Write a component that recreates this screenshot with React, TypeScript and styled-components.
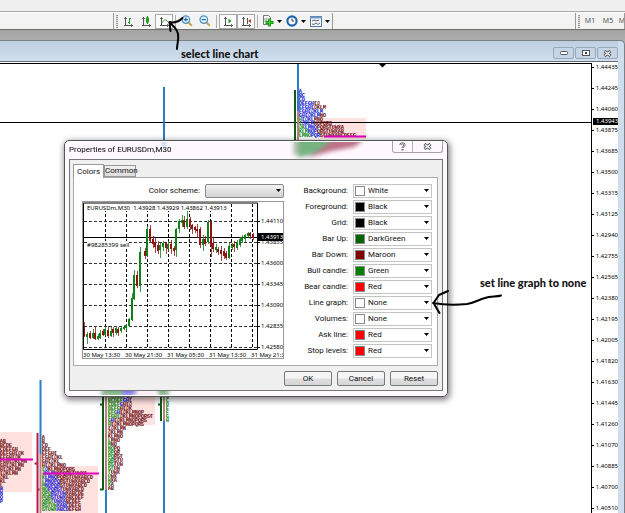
import React from "react";
import styled, { createGlobalStyle } from "styled-components";

const Global = createGlobalStyle`
  * { box-sizing: border-box; }
  html, body { margin: 0; background: #ababab; }
  body { overflow: hidden; font-family: Roboto, "Noto Sans", sans-serif; font-size: 8px; color: #111; }
  button, select { font: inherit; color: inherit; margin: 0; padding: 0; }
`;

const Page = styled.div`
  position: relative;
  display: flex;
  flex-direction: column;
  height: 100vh;
  overflow: hidden;
`;

/* ---------- toolbars ---------- */
const MenuStrip = styled.div`
  flex: none;
  height: 12px;
  background: #f0f0f0;
  border-bottom: 1px solid #a6a6a6;
`;
const ToolbarRow = styled.div`
  flex: none;
  display: flex;
  height: 18px;
  background: #f3f3f3;
  border-top: 1px solid #fff;
  border-bottom: 1px solid #6c7468;
  overflow: hidden;
`;
const Band = styled.div<{ $w?: number }>`
  flex: ${(p) => (p.$w ? `0 0 ${p.$w}px` : "1 1 0")};
  display: flex;
  align-items: center;
  border-right: 1px solid #9a9a9a;
  overflow: hidden;
`;
const Grip = styled.span`
  flex: none;
  width: 2px;
  height: 13px;
  margin: 0 1px 0 2px;
  background: repeating-linear-gradient(#999 0 1px, #ddd 1px 2px);
`;
const Tool = styled.button<{ $on?: boolean; $w?: number }>`
  flex: none;
  display: flex;
  align-items: center;
  justify-content: center;
  gap: 3px;
  width: ${(p) => p.$w ?? 18}px;
  height: 15px;
  border: 1px solid ${(p) => (p.$on ? "#aaa" : "transparent")};
  background: ${(p) => (p.$on ? "#fafafa" : "transparent")};
`;
const Sep = styled.span`
  flex: none;
  width: 1px;
  height: 13px;
  margin: 0 2px;
  background: #b0b0b0;
`;
const Period = styled.button`
  flex: none;
  width: 18px;
  border: 0;
  background: none;
  font-family: "Open Sans", sans-serif;
  font-size: 7px;
  line-height: 12px;
  color: #444;
`;

/* ---------- chart window ---------- */
const Desktop = styled.main`
  flex: 1;
  min-height: 0;
  display: flex;
  flex-direction: column;
  padding-top: 10px;
  background: linear-gradient(#a4a4a4, #adadad 10px);
`;
const ChartWindow = styled.section`
  flex: 1;
  min-height: 0;
  display: flex;
  flex-direction: column;
  border: solid #777f87;
  border-width: 1px 1px 0 0;
  border-radius: 0 5px 0 0;
  background: #cfdeec;
  padding-right: 6px;
`;
const WindowBar = styled.header`
  flex: none;
  display: flex;
  justify-content: flex-end;
  align-items: flex-end;
  gap: 1px;
  height: 21px;
  padding-bottom: 2px;
  background: linear-gradient(#c0cfdf, #cfdfee);
  border-bottom: 1px solid #6a6875;
`;
const WinButton = styled.button`
  display: flex;
  align-items: center;
  justify-content: center;
  width: 21px;
  height: 12px;
  border: 1px solid #98a8bb;
  border-radius: 2px;
  background: #c6d5e5;
`;
const ChartArea = styled.div`
  flex: 1;
  min-height: 0;
  display: flex;
  background: #fff;
  padding-top: 1px;
`;
const Plot = styled.div`
  flex: 1;
  min-width: 0;
  overflow: hidden;
  border: solid #000;
  border-width: 1px 1px 0 0;
  svg { display: block; overflow: visible; }
`;
const Axis = styled.div`
  position: relative;
  flex: 0 0 26px;
  display: flex;
  flex-direction: column;
  gap: 13px;
  overflow: hidden;
`;
const Tick = styled.span`
  flex: none;
  display: flex;
  align-items: center;
  gap: 2px;
  height: 8px;
  font-family: "Noto Sans", sans-serif;
  font-size: 6px;
  line-height: 8px;
  color: #000;
  &::before { content: ""; width: 2px; height: 1px; background: #000; }
`;
const PriceTag = styled.span`
  position: absolute;
  top: 55px;
  left: 1px;
  right: 0;
  height: 7px;
  padding-left: 3px;
  background: #000;
  color: #fff;
  font-family: "Noto Sans", sans-serif;
  font-size: 6px;
  line-height: 7px;
`;

/* ---------- dialog ---------- */
const Dialog = styled.section`
  position: absolute;
  left: 64px;
  top: 140px;
  width: 384px;
  display: flex;
  flex-direction: column;
  padding: 0 4px 5px;
  border: 1px solid #555;
  border-radius: 5px;
  background: rgba(255, 240, 255, 0.4);
  backdrop-filter: blur(2px);
  box-shadow: inset 0 0 0 1px #fff, 1px 2px 6px 1px rgba(0, 0, 0, 0.5);
`;
const DialogBar = styled.header`
  display: flex;
  justify-content: space-between;
  height: 18px;
`;
const DialogTitle = styled.h1`
  margin: 0;
  font-family: Roboto, sans-serif;
  font-size: 8px;
  font-weight: 400;
  line-height: 17px;
  color: #000;
`;
const Caps = styled.div`
  display: flex;
  height: 12px;
  border: 1px solid #a9a3a9;
  border-top: 0;
  border-radius: 0 0 3px 3px;
`;
const Cap = styled.button<{ $w: number }>`
  display: flex;
  align-items: center;
  justify-content: center;
  width: ${(p) => p.$w}px;
  border: 0;
  background: none;
  & + & { border-left: 1px solid #bbb4bb; }
`;
const DialogBody = styled.div`
  display: flex;
  flex-direction: column;
  padding: 4px 4px 4px 3px;
  border: 1px solid #777;
  background: #f0f0f0;
`;
const Tabs = styled.div`
  display: flex;
  align-items: flex-end;
  height: 13px;
`;
const Tab = styled.button<{ $on?: boolean }>`
  position: relative;
  z-index: ${(p) => (p.$on ? 1 : 0)};
  width: ${(p) => (p.$on ? 31 : 32)}px;
  height: ${(p) => (p.$on ? 14 : 12)}px;
  margin-bottom: ${(p) => (p.$on ? -1 : 0)}px;
  border: 1px solid #999;
  border-bottom: ${(p) => (p.$on ? "0" : "1px solid #999")};
  background: ${(p) => (p.$on ? "#fff" : "linear-gradient(#f2f2f2, #dcdcdc)")};
  line-height: 10px;
`;
const Panel = styled.div`
  display: flex;
  justify-content: space-between;
  height: 189px;
  padding: 6px 5px 6px 8px;
  border: 1px solid #aaa;
  background: #fff;
`;
const LeftCol = styled.div`
  display: flex;
  flex-direction: column;
  gap: 3px;
  width: 202px;
`;
const SchemeRow = styled.div`
  display: flex;
  justify-content: flex-end;
  align-items: center;
  gap: 5px;
  height: 14px;
`;
const Preview = styled.div`
  height: 158px;
  border: 1px solid #999;
  svg { display: block; }
`;
const Settings = styled.div`
  display: flex;
  flex-direction: column;
  gap: 2px;
`;
const Setting = styled.div`
  display: flex;
  justify-content: flex-end;
  align-items: center;
  gap: 5px;
  height: 14px;
`;
const Label = styled.label`
  line-height: 12px;
  white-space: nowrap;
`;
const Picker = styled.span`
  position: relative;
  display: flex;
  width: 79px;
  height: 14px;
  svg { position: absolute; right: 3px; top: 5px; pointer-events: none; }
`;
const Select = styled.select<{ $scheme?: boolean }>`
  appearance: none;
  flex: 1;
  min-width: 0;
  height: 14px;
  padding-left: 14px;
  border: 1px solid ${(p) => (p.$scheme ? "#888" : "#c4c4c4")};
  border-radius: ${(p) => (p.$scheme ? 2 : 0)}px;
  background: ${(p) => (p.$scheme ? "linear-gradient(#f2f2f2, #d2d2d2)" : "#fff")};
  line-height: 12px;
`;
const Swatch = styled.span<{ $c: string }>`
  position: absolute;
  left: 2px;
  top: 2px;
  width: 10px;
  height: 10px;
  border: 1px solid #888;
  background: ${(p) => p.$c};
  pointer-events: none;
`;
const Actions = styled.div`
  display: flex;
  justify-content: flex-end;
  gap: 5px;
  padding-top: 5px;
`;
const PushButton = styled.button`
  width: 48px;
  height: 15px;
  border: 1px solid #777;
  border-radius: 2px;
  background: linear-gradient(#f6f6f6 45%, #dedede 55%, #d6d6d6);
  line-height: 12px;
`;

/* ---------- annotations ---------- */
const Note = styled.p<{ $x: number; $y: number }>`
  position: absolute;
  left: ${(p) => p.$x}px;
  top: ${(p) => p.$y}px;
  margin: 0;
  font-family: Lato, sans-serif;
  font-size: 11px;
  font-weight: 900;
  line-height: 14px;
  color: #111;
  white-space: nowrap;
`;
const Ink = styled.svg`
  position: absolute;
  left: 0;
  top: 0;
  pointer-events: none;
  fill: none;
  stroke: #000;
  stroke-width: 2;
  stroke-linecap: round;
  stroke-linejoin: round;
`;

const Arrow = () => (
  <svg width="5" height="3" viewBox="0 0 5 3"><path d="M0 0h5L2.5 3z" fill="#000" /></svg>
);

/* ---------- toolbar icons ---------- */
const Axes = ({ children }: { children?: React.ReactNode }) => (
  <svg width="11" height="11" viewBox="0 0 11 11" fill="none" stroke="#555">
    <path d="M2.5 1v9M1 9.5h9M1.2 2.5h2.6M8.5 8.2v2.6" />
    {children}
  </svg>
);
const Lens = ({ plus }: { plus?: boolean }) => (
  <svg width="12" height="12" viewBox="0 0 12 12" fill="none">
    <path d="M7.5 7.5l3.3 3.3" stroke="#c9a83c" strokeWidth="2" />
    <circle cx="4.8" cy="4.6" r="3.8" fill="#e2f0fb" stroke="#4d8ec4" strokeWidth="1.2" />
    <path d={plus ? "M2.8 4.6h4M4.8 2.6v4" : "M2.8 4.6h4"} stroke="#246cae" strokeWidth="1.2" />
  </svg>
);
const NewIcon = () => (
  <svg width="12" height="12" viewBox="0 0 12 12">
    <path d="M1.5.5h5l2 2v7h-7z" fill="#fff" stroke="#777" />
    <path d="M3 3v4M4.8 2.5v4" stroke="#999" />
    <path d="M7.5 3.5v8M3.5 7.5h8" stroke="#149714" strokeWidth="2.8" />
    <path d="M7.5 4.5v6M4.5 7.5h6" stroke="#36d236" />
  </svg>
);
const ClockIcon = () => (
  <svg width="12" height="12" viewBox="0 0 12 12">
    <circle cx="6" cy="6" r="4.6" fill="#f4f8fc" stroke="#1e62ae" strokeWidth="2.1" />
    <path d="M6 3.5V6h2" fill="none" stroke="#444" />
  </svg>
);
const TemplateIcon = () => (
  <svg width="12" height="11" viewBox="0 0 12 11" fill="none">
    <rect x=".5" y=".5" width="11" height="10" fill="#f6f9fc" stroke="#51789f" />
    <path d="M0 1.5h12" stroke="#6d9bc8" strokeWidth="2" />
    <path d="M2 5l2-1 2 1 3-1M2 8l2 .5L6 7l2 1.5L10 7" stroke="#666" />
  </svg>
);

/* ---------- price profiles ---------- */
const GREEN = "#108a10";
const BLUE = "#1818d0";
const MAROON = "#701010";
const LETTERS = "ABCDEFGHIJKLMNOPQRSTUWX";
type Row = [number, number, number];

const letters = (from: number, n: number) =>
  Array.from({ length: n }, (_, i) => LETTERS[(from + i) % LETTERS.length]).join("");

const Profile = ({ x, y, rows }: { x: number; y: number; rows: Row[] }) => (
  <g fontFamily="Liberation Mono, monospace" fontSize="5" fontWeight="700">
    {rows.map(([g, b, m], i) => (
      <g key={i}>
        <g strokeWidth="3" strokeDasharray="1 2" opacity=".4">
          <path d={`M${x} ${y + i * 4 - 2}h${g * 3}`} stroke={GREEN} />
          <path d={`M${x + g * 3} ${y + i * 4 - 2}h${b * 3}`} stroke={BLUE} />
          <path d={`M${x + (g + b) * 3} ${y + i * 4 - 2}h${m * 3}`} stroke={MAROON} />
        </g>
        <text x={x} y={y + i * 4}>
          <tspan fill={GREEN}>{letters(i, g)}</tspan>
          <tspan fill={BLUE}>{letters(i + g, b)}</tspan>
          <tspan fill={MAROON}>{letters(i + g + b, m)}</tspan>
        </text>
      </g>
    ))}
  </g>
);

const edge: Row[] = [[0,0,2],[0,0,4],[0,0,6],[0,0,8],[0,0,7],[0,0,9],[0,0,8],[0,0,7],[0,0,6],[0,0,3],[0,0,2],[0,0,1],[0,1,0],[0,1,0],[0,1,0],[0,1,0]];
const second: Row[] = [[0,0,1],[0,0,1],[0,0,2],[0,0,3],[0,0,5],[0,0,7],[0,0,6],[0,0,8],[1,1,9],[1,3,11],[1,4,12],[1,5,10],[1,5,9],[2,5,7],[3,5,6],[3,5,6],[4,4,5],[5,4,4],[5,4,4]];
const third: Row[] = [[5,3,0],[5,2,1],[4,1,3],[4,0,4],[3,1,8],[4,0,11],[1,1,11],[1,0,11],[0,0,6],[0,0,5],[0,0,5],[1,0,3],[1,0,2],[2,0,2],[2,0,2],[2,0,3],[2,0,3],[2,0,3],[2,0,2],[1,0,3],[1,0,2],[1,0,2],[1,0,1],[0,0,2]];
const fourth: Row[] = Array.from({ length: 8 }, () => [1, 0, 0] as Row);
const top: Row[] = [[0,1,0],[0,2,0],[0,2,0],[0,5,2],[0,5,4],[0,8,0],[0,7,2],[1,4,3],[1,4,6],[2,4,9],[3,3,9],[4,3,12]];

const Main = () => (
  <svg width="591" height="449" viewBox="0 64 591 449">
    <g fill="#ffe2e0">
      <path d="M0 432h32v60H0zM43 466h55v47H43zM108 392h47v33h-47zM320 118h46v21h-46z" />
    </g>
    <path d="M0 122.5h3000" stroke="#000" />
    <path d="M379 64h7l-3.500 3.500z" />
    <g strokeWidth="2">
      <path d="M164 87v60M40.500 380v74M106 490v23M164 421v92M298 64v47" stroke="#2580c8" />
      <path d="M40.500 454v59M106 390v100M164 390v31M298 111v44" stroke="#b48288" />
      <path d="M37.500 433v80M34.500 463.500h3M37.500 489.500h2" stroke="#b81c4e" />
      <path d="M103 390v100M100 404.500h3M100 489.500h3M161 390v31M158 404.500h3M295 90v65" stroke="#0f5c18" />
    </g>
    <Profile x={0} y={443} rows={edge} />
    <Profile x={42} y={439} rows={second} />
    <Profile x={108} y={398} rows={third} />
    <Profile x={166} y={394} rows={fourth} />
    <Profile x={299} y={93} rows={top} />
    <path d="M0 459.500h33M43 473.500h56M324 136.500h42" stroke="#e000c0" strokeWidth="2" />
    <path d="M298 140h34l-12 12-22 6z" fill="#1c8a2c" />
    <path d="M332 140h32l-10 7-22 4-26 7 14-8z" fill="#902038" />
    <path d="M103 386h26v8h-26zM158 386h10v8h-10z" fill="#1c8a2c" />
    <path d="M122 386h14v8h-14z" fill="#2a2ad8" />
  </svg>
);

/* x, body top, body bottom, wick top, wick bottom, rising */
type Candle = [number, number, number, number, number, number];
const candles: Candle[] = [
  [84,326,336,322,337,0],[87,334,337,332,344,1],[90,333,338,331,339,0],[93,333,338,329,339,1],[95,333,339,327,340,0],[98,336,339,334,340,1],
  [100,333,338,330,339,1],[103,331,335,329,336,0],[105,329,335,327,336,1],[108,330,336,326,338,0],[111,331,336,327,337,1],[113,329,333,327,337,0],
  [116,328,333,326,335,1],[118,329,333,327,336,0],[121,328,331,327,333,1],[124,327,329,325,330,1],[126,325,328,324,331,1],[129,319,326,318,327,1],
  [132,298,320,293,321,1],[134,275,299,270,300,1],[137,275,286,271,288,0],[140,252,286,247,292,1],[145,251,256,248,259,0],[147,229,256,226,257,1],
  [150,229,241,225,242,0],[153,239,244,236,248,0],[155,242,247,238,253,0],[158,245,251,241,254,0],[160,245,250,243,258,1],[163,243,247,241,251,1],
  [166,243,248,242,254,0],[168,244,249,241,252,1],[171,244,249,240,254,0],[174,248,251,246,256,0],[176,229,250,228,257,1],[179,221,229,219,233,1],
  [182,220,223,215,227,1],[184,220,227,216,229,0],[187,219,227,211,229,1],[190,219,225,217,230,0],[192,225,229,224,234,0],[195,227,230,226,233,0],
  [197,229,231,224,238,0],[200,229,245,227,248,0],[203,239,245,235,251,1],[205,239,244,236,246,0],[208,222,242,220,244,1],[211,222,246,220,257,0],
  [213,243,249,238,252,0],[216,247,250,244,253,1],[218,249,252,247,255,0],[221,250,254,246,261,0],[224,251,256,248,259,0],[226,253,258,251,260,0],
  [229,246,258,243,259,1],[232,245,248,243,250,1],[234,244,247,241,252,0],[237,243,248,240,250,1],[240,239,245,237,247,1],[242,237,241,235,243,1],
  [245,235,239,234,242,1],[248,233,236,232,238,1],[250,233,236,232,239,0],[253,235,238,233,240,0],
];
const prices = ["1.44110", "1.43855", "1.43600", "1.43345", "1.43090", "1.42835", "1.42580"];
const times = ["30 May 13:30", "30 May 21:30", "31 May 05:30", "31 May 13:30", "31 May 21:30"];

const PreviewChart = () => (
  <svg width="200" height="156" viewBox="83 202 200 156" fontFamily="Noto Sans, sans-serif" fontSize="6">
    <path d="M105.500 204v145M126.500 204v145M147.500 204v145M168.500 204v145M189.500 204v145M210.500 204v145M231.500 204v145M252.500 204v145" stroke="#000" strokeDasharray="3 2" />
    <path d="M84 221.500h173M84 242.500h173M84 263.500h173M84 284.500h173M84 305.500h173M84 326.500h173M84 347.500h173" stroke="#333" strokeDasharray="3 2" />
    <path d="M84 237.500h174" stroke="#000" />
    {candles.map(([x, t, b, h, l, up]) => (
      <g key={x} fill={up ? "#108018" : "#901414"}>
        <rect x={x - 1} y={t} width="2" height={b - t} />
        <rect x={x} y={h} width="1" height={l - h} opacity=".8" />
      </g>
    ))}
    <path d="M83.500 349.500v-146.500h174v146.500z" fill="none" stroke="#000" />
    <rect x="86" y="204" width="143" height="7" fill="#fff" />
    <text x="87" y="210" xmlSpace="preserve">EURUSDm,M30  1.43928 1.43929 1.43862 1.43913</text>
    <rect x="87" y="241" width="42" height="6" fill="#fff" />
    <text x="87" y="247">#98285399 sell</text>
    {prices.map((p, i) => (
      <g key={p}>
        <path d={`M258 ${221.5 + i * 21}h2`} stroke="#000" />
        <text x="261" y={223 + i * 21}>{p}</text>
      </g>
    ))}
    <rect x="258" y="233" width="26" height="8" />
    <text x="261" y="239" fill="#fff">1.43913</text>
    {times.map((t, i) => (
      <text key={t} x={83 + i * 42} y="357">{t}</text>
    ))}
  </svg>
);

const axisPrices = [
  "1.44435", "1.44245", "1.44060", "1.43875", "1.43685", "1.43500", "1.43315", "1.43125", "1.42940", "1.42755", "1.42565",
  "1.42380", "1.42195", "1.42005", "1.41820", "1.41630", "1.41445", "1.41260", "1.41070", "1.40885", "1.40700", "1.40510",
];
const settings: [string, string, string][] = [
  ["Background:", "White", "#fff"], ["Foreground:", "Black", "#000"], ["Grid:", "Black", "#000"],
  ["Bar Up:", "DarkGreen", "#006400"], ["Bar Down:", "Maroon", "#800000"], ["Bull candle:", "Green", "#008000"],
  ["Bear candle:", "Red", "#f00"], ["Line graph:", "None", "#fff"], ["Volumes:", "None", "#fff"],
  ["Ask line:", "Red", "#f00"], ["Stop levels:", "Red", "#f00"],
];

const CloseGlyph = () => (
  <svg width="9" height="7" viewBox="0 0 9 7">
    <path d="M1.500 1l6 5M7.500 1l-6 5" stroke="#555" strokeWidth="3" />
    <path d="M2 1.400l5 4.200M7 1.400l-5 4.200" stroke="#fff" strokeWidth="1.300" />
  </svg>
);

export default function App() {
  return (
    <Page>
      <Global />
      <MenuStrip />
      <ToolbarRow>
        <Band $w={114} />
        <Band $w={219}>
          <Grip />
          <Tool aria-label="Bar chart"><Axes><path d="M6.500 2v6M5 6.500h1.500M6.500 2.500H8" stroke="#1a9a2a" /></Axes></Tool>
          <Tool aria-label="Candlesticks"><Axes><path d="M6.500 0v8" stroke="#178a22" /><path d="M6.500 1.500v5" stroke="#17a52a" strokeWidth="3" /></Axes></Tool>
          <Tool $on aria-label="Line chart"><Axes><path d="M3 7c2-4 4-4 7 0" stroke="#3aa648" /></Axes></Tool>
          <Sep />
          <Tool aria-label="Zoom in"><Lens plus /></Tool>
          <Tool aria-label="Zoom out"><Lens /></Tool>
          <Sep />
          <Tool $on aria-label="Auto scroll"><Axes><path d="M5.500 2.500v5l3-2.500z" fill="#1a9a2a" stroke="none" /></Axes></Tool>
          <Tool $on aria-label="Chart shift"><Axes><path d="M6.500 2v6" /><path d="M10 3v4L7 5z" fill="#b04428" stroke="none" /></Axes></Tool>
          <Sep />
          <Tool $w={24} aria-label="Indicators"><NewIcon /><Arrow /></Tool>
          <Tool $w={24} aria-label="Periods"><ClockIcon /><Arrow /></Tool>
          <Tool $w={24} aria-label="Templates"><TemplateIcon /><Arrow /></Tool>
        </Band>
        <Band />
        <Band $w={49}>
          <Grip />
          <Period>M1</Period>
          <Period>M5</Period>
          <Period>M15</Period>
        </Band>
      </ToolbarRow>
      <Desktop>
        <ChartWindow>
          <WindowBar>
            <WinButton aria-label="Minimize">
              <svg width="8" height="4" viewBox="0 0 8 4"><rect x=".5" y=".5" width="7" height="3" rx="1" fill="#fff" stroke="#555" /></svg>
            </WinButton>
            <WinButton aria-label="Restore">
              <svg width="8" height="6" viewBox="0 0 8 6"><rect x=".5" y=".5" width="7" height="5" fill="#fff" stroke="#555" /><path d="M3 3h2" stroke="#444" strokeWidth="2" /></svg>
            </WinButton>
            <WinButton aria-label="Close"><CloseGlyph /></WinButton>
          </WindowBar>
          <ChartArea>
            <Plot><Main /></Plot>
            <Axis>
              {axisPrices.map((p) => <Tick key={p}>{p}</Tick>)}
              <PriceTag>1.43943</PriceTag>
            </Axis>
          </ChartArea>
        </ChartWindow>
      </Desktop>

      <Dialog role="dialog" aria-labelledby="dialog-title">
        <DialogBar>
          <DialogTitle id="dialog-title">Properties of EURUSDm,M30</DialogTitle>
          <Caps>
            <Cap $w={19} aria-label="Help">
              <svg width="7" height="9" viewBox="0 0 7 9" fill="none">
                <path d="M1.500 3c0-2.500 4-2.500 4 0 0 1.300-2 1.200-2 3M3.500 7v1.500" stroke="#666" strokeWidth="2" />
                <path d="M1.500 3c0-2.500 4-2.500 4 0 0 1.300-2 1.200-2 2.500" stroke="#fff" strokeWidth=".6" />
              </svg>
            </Cap>
            <Cap $w={30} aria-label="Close"><CloseGlyph /></Cap>
          </Caps>
        </DialogBar>
        <DialogBody>
          <Tabs role="tablist">
            <Tab role="tab" aria-selected="true" $on>Colors</Tab>
            <Tab role="tab" aria-selected="false">Common</Tab>
          </Tabs>
          <Panel role="tabpanel">
            <LeftCol>
              <SchemeRow>
                <Label htmlFor="scheme">Color scheme:</Label>
                <Picker>
                  <Select id="scheme" $scheme><option></option></Select>
                  <Arrow />
                </Picker>
              </SchemeRow>
              <Preview><PreviewChart /></Preview>
            </LeftCol>
            <Settings>
              {settings.map(([name, value, color], i) => (
                <Setting key={name}>
                  <Label htmlFor={`color-${i}`}>{name}</Label>
                  <Picker>
                    <Select id={`color-${i}`}><option>{value}</option></Select>
                    <Swatch $c={color} />
                    <Arrow />
                  </Picker>
                </Setting>
              ))}
            </Settings>
          </Panel>
          <Actions>
            <PushButton>OK</PushButton>
            <PushButton>Cancel</PushButton>
            <PushButton>Reset</PushButton>
          </Actions>
        </DialogBody>
      </Dialog>

      <Note $x={181} $y={47}>select line chart</Note>
      <Note $x={480} $y={276}>set line graph to none</Note>
      <Ink width="625" height="513">
        <path d="M177 49c0-5 2-10 1-15-1-4-3-7-7-10M170.500 31l-1-9c4 1 9 0 13-4" />
        <path d="M433 303c11 2 24 2 34 1 7-1 11-4 18-6 6-2 11-1 16-2.500M448 291l-9 4-5.500 8 6 10" />
      </Ink>
    </Page>
  );
}
